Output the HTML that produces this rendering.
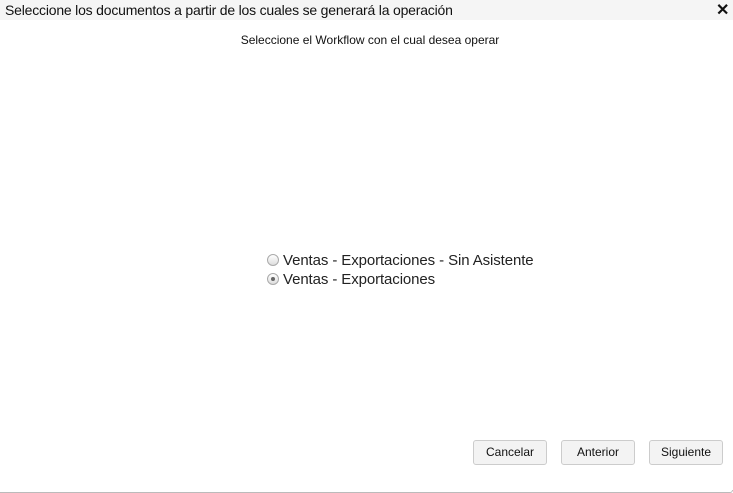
<!DOCTYPE html>
<html><head><meta charset="utf-8"><style>
body{margin:0;width:733px;height:493px;background:#fff;font-family:"Liberation Sans",sans-serif;position:relative;overflow:hidden}
.tb{position:absolute;left:0;top:0;width:733px;height:20px;background:#f5f5f5}
.tt{position:absolute;left:5px;top:2px;font-size:14px;color:#111;letter-spacing:-0.2px}
.x{position:absolute;left:716px;top:0px;font-size:16px;font-weight:bold;color:#111}
.sub{position:absolute;left:0;width:740px;top:33px;text-align:center;font-size:12px;color:#111}
.opt{position:absolute;left:267px;font-size:15px;color:#222;letter-spacing:-0.1px}
.r{display:inline-block;width:10px;height:10px;border:1px solid #aaa;border-radius:50%;background:linear-gradient(#fff,#ddd);vertical-align:-1px;margin-right:4px;position:relative}
.r.on::after{content:"";position:absolute;left:3px;top:3px;width:4px;height:4px;border-radius:50%;background:#666}
.b{position:absolute;top:440px;width:72px;height:23px;border:1px solid #ccc;border-radius:3px;background:#f3f3f3;font-size:12px;text-align:center;line-height:22px;color:#111}
.bot{position:absolute;left:0;top:490px;width:732px;height:2px;border-bottom:1px solid #bbb;border-right:1px solid #bbb;border-radius:0 0 4px 0}
</style></head><body>
<div class="tb"><div class="tt">Seleccione los documentos a partir de los cuales se generará la operación</div><div class="x">✕</div></div>
<div class="sub">Seleccione el Workflow con el cual desea operar</div>
<div class="opt" style="top:252px"><span class="r"></span>Ventas - Exportaciones - Sin Asistente</div>
<div class="opt" style="top:271px"><span class="r on"></span>Ventas - Exportaciones</div>
<div class="b" style="left:473px">Cancelar</div>
<div class="b" style="left:561px">Anterior</div>
<div class="b" style="left:649px">Siguiente</div>
<div class="bot"></div>
</body></html>
